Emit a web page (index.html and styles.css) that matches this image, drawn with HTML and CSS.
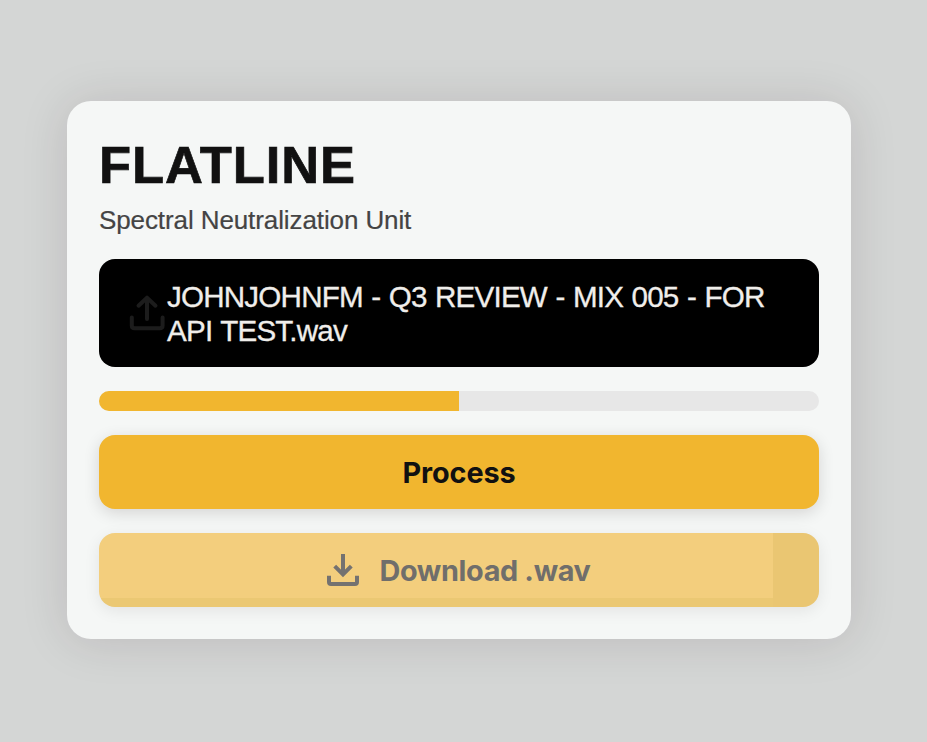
FILE: index.html
```html
<!DOCTYPE html>
<html lang="en">
<head>
<meta charset="utf-8">
<title>Flatline</title>
<link rel="stylesheet" href="styles.css">
</head>
<body>
<main class="card">
  <h1 class="title">FLATLINE</h1>
  <p class="subtitle">Spectral Neutralization Unit</p>
  <div class="file">
    <svg class="file-icon" viewBox="0 0 40 40" fill="none" stroke="#1c1c1c" stroke-width="4" stroke-linecap="round" stroke-linejoin="round">
      <path d="M20 26V5M11.5 12.7L20 4.7L28.5 12.7M4.8 24.5V32.5Q4.8 35.3 7.6 35.3H32.8Q35.6 35.3 35.6 32.5V24.5"/>
    </svg>
    <span class="file-name">JOHNJOHNFM - Q3 REVIEW - MIX 005 - FOR API TEST.wav</span>
  </div>
  <div class="progress"><div class="progress-fill"></div></div>
  <button class="button">Process</button>
  <button class="button button-disabled">
    <svg class="download-icon" viewBox="0 0 32 32" fill="none" stroke="#747270" stroke-width="4">
      <path d="M16 0V20M7.7 12.2L16 20.5L24.3 12.2M2 21.7V28Q2 30 4 30H28Q30 30 30 28V21.7"/>
    </svg>
    <span class="download-label">Download .wav</span>
  </button>
</main>
</body>
</html>
```

FILE: styles.css
```css
* {
  box-sizing: border-box;
}

body {
  margin: 0;
  padding: 101px 76px 103px 67px;
  height: 742px;
  overflow: hidden;
  background: #d4d6d5;
  font-family: "Liberation Sans", Arial, sans-serif;
}

.card {
  display: flex;
  flex-direction: column;
  height: 538px;
  padding: 32px;
  border-radius: 24px;
  background: #f5f7f6;
  box-shadow: 0 2px 48px rgba(40, 10, 20, 0.13);
}

.title {
  margin: 0;
  height: 64px;
  font-size: 52.5px;
  font-weight: 700;
  line-height: 64px;
  letter-spacing: 0.9px;
  color: #111;
  -webkit-text-stroke: 0.7px #111;
}

.subtitle {
  margin: 7px 0 23px;
  height: 32px;
  font-size: 26px;
  line-height: 32px;
  letter-spacing: -0.1px;
  color: #444;
  -webkit-text-stroke: 0.2px #444;
}

.file {
  display: flex;
  align-items: center;
  height: 108px;
  padding: 0 28px;
  border-radius: 16px;
  background: #000;
}

.file-icon {
  flex: none;
  width: 40px;
  height: 40px;
}

.file-name {
  padding-top: 1px;
  font-size: 29.6px;
  line-height: 34px;
  letter-spacing: -0.8px;
  word-spacing: 1px;
  color: #f0eeeb;
  -webkit-text-stroke: 0.3px #f0eeeb;
}

.progress {
  height: 20px;
  margin: 24px 0;
  border-radius: 10px;
  overflow: hidden;
  background: #e7e7e7;
}

.progress-fill {
  width: 50%;
  height: 100%;
  background: #f1b62f;
}

.button {
  display: flex;
  align-items: center;
  justify-content: center;
  gap: 20px;
  height: 74px;
  padding: 2px 0 0;
  border: 0;
  border-radius: 16px;
  background: #f1b62f;
  box-shadow: 0 4px 16px rgba(20, 0, 10, 0.14);
  font: 700 28.8px/36px Inter, sans-serif;
  letter-spacing: -0.1px;
  color: #111;
}

.button-disabled {
  margin-top: 24px;
  background:
    linear-gradient(#eac672, #eac672) right / 46px 100% no-repeat,
    linear-gradient(#ebc873, #ebc873) bottom / 100% 9px no-repeat,
    #f3ce7d;
  box-shadow: 0 4px 16px rgba(20, 0, 10, 0.08);
  color: #706e6b;
  letter-spacing: -0.33px;
}

.download-icon {
  width: 32px;
  height: 32px;
  margin-top: -2px;
}
```
